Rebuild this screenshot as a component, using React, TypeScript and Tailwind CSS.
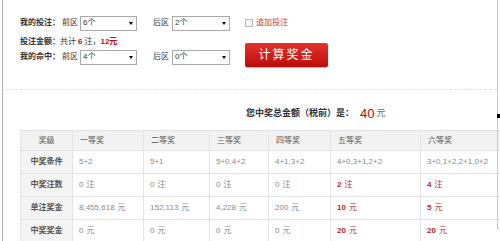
import React from 'react';

const FONT = 'font-["Liberation_Sans","Noto_Sans_CJK_SC",sans-serif]';

const FakeSelect = ({ value, width }: { value: string; width: string }) => (
  <div className={`${width} h-[15px] flex items-center justify-between border border-[#a9a9a9] bg-white pl-[2px] pr-[3px] text-[8px] text-[#333]`}>
    <span>{value}</span>
    <span className="w-0 h-0 border-l-[2px] border-r-[2px] border-t-[3px] border-l-transparent border-r-transparent border-t-black" />
  </div>
);

const columns = ['一等奖', '二等奖', '三等奖', '四等奖', '五等奖', '六等奖'];
const colWidths = ['w-[52px]', 'w-[71px]', 'w-[66px]', 'w-[59px]', 'w-[62px]', 'w-[90px]', 'w-[90px]'];

type Cell = { text: string; unit?: string; hit?: boolean };

const rows: { label: string; cells: Cell[] }[] = [
  {
    label: '中奖条件',
    cells: [
      { text: '5+2' },
      { text: '5+1' },
      { text: '5+0,4+2' },
      { text: '4+1,3+2' },
      { text: '4+0,3+1,2+2' },
      { text: '3+0,1+2,2+1,0+2' },
    ],
  },
  {
    label: '中奖注数',
    cells: [
      { text: '0', unit: '注' },
      { text: '0', unit: '注' },
      { text: '0', unit: '注' },
      { text: '0', unit: '注' },
      { text: '2', unit: '注', hit: true },
      { text: '4', unit: '注', hit: true },
    ],
  },
  {
    label: '单注奖金',
    cells: [
      { text: '8,455,618', unit: '元' },
      { text: '152,113', unit: '元' },
      { text: '4,228', unit: '元' },
      { text: '200', unit: '元' },
      { text: '10', unit: '元', hit: true },
      { text: '5', unit: '元', hit: true },
    ],
  },
  {
    label: '中奖奖金',
    cells: [
      { text: '0', unit: '元' },
      { text: '0', unit: '元' },
      { text: '0', unit: '元' },
      { text: '0', unit: '元' },
      { text: '20', unit: '元', hit: true },
      { text: '20', unit: '元', hit: true },
    ],
  },
];

export default function App() {
  return (
    <div className={`relative w-[500px] h-[241px] overflow-hidden bg-white pl-[2px] ${FONT}`}>
      {/* right panel edge + stray dot */}
      <div className="absolute left-[497px] top-0 h-[230px] w-[1px] bg-[#c8c8c8]" />
      <div className="absolute left-[497px] top-[114px] h-[4px] w-[3px] bg-black" />

      <div className="h-full border-l border-[#b0b0b0]">
        {/* form */}
        <div className="pl-[17px] pt-[15px]">
          <div className="flex h-[16px] items-center text-[8px] text-[#333]">
            <div className="flex w-[225px] items-center">
              <span className="w-[42px] font-bold">我的投注：</span>
              <span className="w-[18px]">前区</span>
              <FakeSelect value="6个" width="w-[57px]" />
              <span className="ml-[16px] w-[19px]">后区</span>
              <FakeSelect value="2个" width="w-[58px]" />
            </div>
            <span className="h-[8px] w-[8px] border border-[#b8b8b8] bg-[#f4f4f4]" />
            <span className="ml-[3px] text-[#cc3333]">追加投注</span>
          </div>

          <div className="mt-[4px] flex">
            <div className="w-[225px] text-[8px] text-[#333]">
              <div className="flex h-[14px] items-center">
                <span className="font-bold">投注金额：</span>
                <span>共计</span>
                <span className="mx-[2px] font-bold text-[#cc0000]">6</span>
                <span>注，</span>
                <span className="font-bold text-[#cc0000]">12元</span>
              </div>
              <div className="flex h-[16px] items-center">
                <span className="w-[42px] font-bold">我的命中：</span>
                <span className="w-[18px]">前区</span>
                <FakeSelect value="4个" width="w-[57px]" />
                <span className="ml-[16px] w-[19px]">后区</span>
                <FakeSelect value="0个" width="w-[58px]" />
              </div>
            </div>
            <button className="mt-[8px] flex h-[24px] w-[83px] items-center justify-center rounded-[2px] bg-gradient-to-b from-[#e8302a] to-[#b80a0a] text-[12px] tracking-[2px] text-white shadow-[0_1px_1px_rgba(0,0,0,0.3)]">
              计算奖金
            </button>
          </div>
        </div>

        {/* divider */}
        <div className="ml-[2px] mr-[3px] mt-[22px] border-t border-dashed border-[#e2e2e2]" />

        {/* summary */}
        <div className="mt-[17px] flex h-[14px] items-center pl-[243px] text-[9px] text-[#333]">
          <span className="font-bold">您中奖总金额（税前）是：</span>
          <span className="ml-[6px] text-[13px] text-[#c00000]">40</span>
          <span className="ml-[2px] text-[#666]">元</span>
        </div>

        {/* table */}
        <table className="ml-[17px] mt-[9px] w-[490px] table-fixed border-collapse text-[8px]">
          <colgroup>
            {colWidths.map((w, i) => (
              <col key={i} className={w} />
            ))}
          </colgroup>
          <thead>
            <tr className="h-[20px] bg-[#f2f2f2] text-[#555]">
              <th className="border border-[#e3e3e3] text-center font-normal">奖级</th>
              {columns.map(c => (
                <th key={c} className="border border-[#e3e3e3] pl-[7px] text-left font-normal">
                  {c}
                </th>
              ))}
            </tr>
          </thead>
          <tbody>
            {rows.map(row => (
              <tr key={row.label} className="h-[23px]">
                <td className="border border-[#e3e3e3] bg-[#f4f4f4] text-center font-bold text-[#555]">
                  {row.label}
                </td>
                {row.cells.map((c, i) => (
                  <td
                    key={i}
                    className={`border border-[#e3e3e3] pl-[6px] ${c.hit ? 'text-[#c4222a]' : 'text-[#888]'}`}
                  >
                    <span className={c.hit ? 'font-bold' : ''}>{c.text}</span>
                    {c.unit && <span className="ml-[3px]">{c.unit}</span>}
                  </td>
                ))}
              </tr>
            ))}
          </tbody>
        </table>
      </div>
    </div>
  );
}
